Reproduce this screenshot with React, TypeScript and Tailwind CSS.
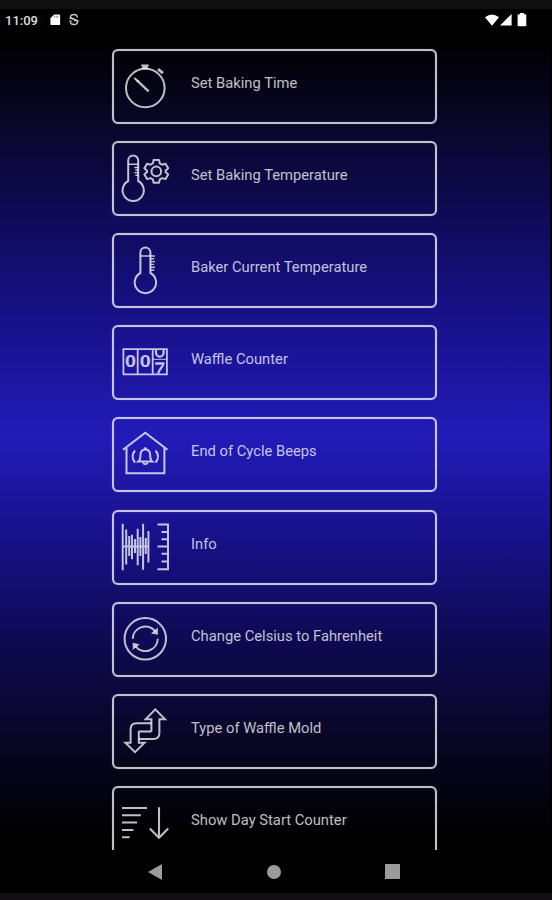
import type { ReactNode } from "react";

const Icon = ({ children }: { children: ReactNode }) => (
  <svg viewBox="0 0 56 60" className="h-[60px] w-[56px] shrink-0" fill="none" stroke="currentColor" strokeWidth="2">
    {children}
  </svg>
);

const Stopwatch = () => (
  <Icon>
    <circle cx="27.3" cy="31" r="19.3" />
    <path d="M23 7.6h8l-1.8 4.4h-4.4z" fill="currentColor" stroke="none" />
    <path d="M40 12.2l5 4" strokeWidth="2.8" />
    <path d="M16.3 21l4 3.6" />
    <path d="M19 23.4l11.6 11" strokeWidth="2.3" />
  </Icon>
);

const ThermometerGear = () => (
  <Icon>
    <path d="M10.2 32V11.5a5 5 0 0 1 10 0V32a10.6 10.6 0 1 1-10 0z" />
    <path d="M10.2 15.3h10M16.3 18.5h4M17.3 21h3M16.3 23.6h4M17.3 26.2h3" strokeWidth="1.4" />
    <circle cx="38.3" cy="22.4" r="4.8" />
    <path
      d="M35.6 11h5.4l.8 3.4 2.3 1.3 3.4-1 2.7 4.6-2.6 2.4v1.4l2.6 2.4-2.7 4.6-3.4-1-2.3 1.3-.8 3.4h-5.4l-.8-3.4-2.3-1.3-3.4 1-2.7-4.6 2.6-2.4v-1.4l-2.6-2.4 2.7-4.6 3.4 1 2.3-1.3z"
      strokeLinejoin="round"
    />
  </Icon>
);

const Thermometer = () => (
  <Icon>
    <path d="M22.4 32V11.4a5 5 0 0 1 10 0V32a10.7 10.7 0 1 1-10 0z" />
    <path d="M22.4 15H37M32.4 17.8h3.8M32.4 20.6H37M32.4 23.4h3.8M32.4 26.2H37M32.4 29h3.8" strokeWidth="1.4" />
  </Icon>
);

const Counter = () => (
  <Icon>
    <path d="M5.4 16.2h43.5v25.2H5.4zM19.7 16.2v25.2M34.7 16.2v25.2" strokeWidth="1.8" />
    <g fill="currentColor" stroke="none" fontFamily="Liberation Sans, sans-serif" fontWeight="700" fontSize="16.5">
      <text x="7" y="34.4" textLength="11" lengthAdjust="spacingAndGlyphs">0</text>
      <text x="21.7" y="34.4" textLength="11" lengthAdjust="spacingAndGlyphs">0</text>
    </g>
    <path d="M38 17v2.4a3.8 4.2 0 0 0 7.6 0V17" strokeWidth="2.2" />
    <path d="M35 26.3h13.5" strokeWidth="1" />
    <path d="M37.2 30.5h8.2c-.3 4-4.5 5-5.2 10" strokeWidth="2.3" />
  </Icon>
);

const HouseBell = () => (
  <Icon>
    <path d="M5 24.8L27.3 7.7 49.5 24.8M8.5 23v25.2h37.9V23" />
    <path d="M20.3 36.6c2.5-1.8 2-4.5 2.2-7.1.2-3 2-5 4.8-5s4.6 2 4.8 5c.2 2.6-.3 5.3 2.2 7.1z" />
    <path d="M27.3 22.2v2.3M25 37.5c.7 2.3 3.9 2.3 4.6 0" />
    <path d="M17 25.5c-3 3.7-3 8.3 0 12M37.6 25.5c3 3.7 3 8.3 0 12" />
  </Icon>
);

const WaveRuler = () => (
  <Icon>
    <path d="M4.7 5.8v46.5M8.2 11.5v35M11.2 18v20M14 16.7v24.6M17 21v14M19.7 10.7v36.6M22.4 19v19M25.1 5.8v46M27.8 20v16M30.4 13v31.6M4.7 28.4h26" />
    <path d="M39.5 6.4H50v44.9H39.5M39.5 28.4H50M43.5 14h6.5M43.5 21.2h6.5M43.5 35.8h6.5M43.5 43.4h6.5" />
  </Icon>
);

const Convert = () => (
  <Icon>
    <circle cx="27.3" cy="28.8" r="20.7" />
    <path d="M14.8 28.8a12.5 12.5 0 0 1 22.4-7.4M39.8 28.8a12.5 12.5 0 0 1-22.4 7.4" />
    <path d="M39.9 17.6v7.2l-7-1.4zM14.7 40v-7.2l7 1.4z" fill="currentColor" stroke="none" />
  </Icon>
);

const SwapArrows = () => (
  <Icon>
    <path d="M33.4 29.6V17.2h-5.8L37.3 7.4l9.7 9.8h-5.6V31q0 6-6 6H20.8" />
    <path d="M20.8 29v11.7h5.8L17 50.2l-9.6-9.5h5.2V27.3q0-6 6-6h14.8M20.8 29.6h12.6" />
  </Icon>
);

const SortDown = () => (
  <Icon>
    <path d="M4 14h25M4 21.2h18.8M4 28.5H19M4 36h11.4M4 43.3h7.7" />
    <path d="M41 13.3v30.5M31.8 34.6l9.2 9.2 9.2-9.2" strokeWidth="2.1" />
  </Icon>
);

const items = [
  { label: "Set Baking Time", icon: <Stopwatch /> },
  { label: "Set Baking Temperature", icon: <ThermometerGear /> },
  { label: "Baker Current Temperature", icon: <Thermometer /> },
  { label: "Waffle Counter", icon: <Counter /> },
  { label: "End of Cycle Beeps", icon: <HouseBell /> },
  { label: "Info", icon: <WaveRuler /> },
  { label: "Change Celsius to Fahrenheit", icon: <Convert /> },
  { label: "Type of Waffle Mold", icon: <SwapArrows /> },
  { label: "Show Day Start Counter", icon: <SortDown /> },
];

const StatusBar = () => (
  <header className="flex h-[21px] shrink-0 items-center justify-between pl-[5px] pr-[23px] text-white">
    <div className="flex items-center">
      <span className="w-[45px] pt-[2px] text-[13px] leading-none font-medium text-[#dcdcdc]">11:09</span>
      <svg viewBox="0 0 11 13" className="h-[12px] w-[11px]">
        <path d="M4 0.5h5.5q1 0 1 1V11q0 1-1 1H1q-1 0-1-1V4.5z" fill="#fff" />
        <path d="M4.6 2v2M6.4 2v2M8.2 2v2" stroke="#666" strokeWidth="0.8" />
      </svg>
      <svg viewBox="0 0 12 14" className="ml-[7px] h-[13px] w-[12px]" fill="none" stroke="#c4c4c4" strokeWidth="1.6">
        <path d="M9.6 4.8C9.6.6 2.2.6 2.2 4.2c0 2.8 7.8 2.4 7.8 5.2 0 4-8 4-8-.2" />
        <path d="M1 5.8h5M6 8.2h5M1 8.6h3" strokeWidth="1.3" />
      </svg>
    </div>
    <div className="flex items-center">
      <svg viewBox="0 0 14 12" className="h-[12px] w-[14px]">
        <path d="M0 3.2Q7-2.4 14 3.2L7 11.8z" fill="#fff" />
      </svg>
      <svg viewBox="0 0 12 12" className="ml-px h-[12px] w-[12px]">
        <path d="M11.6 0v11.6H0z" fill="#fff" />
      </svg>
      <svg viewBox="0 0 10 14" className="ml-[5px] h-[14px] w-[10px]">
        <path d="M3 0h4v1.3h1.3q1 0 1 1v10q0 1-1 1H1.6q-1 0-1-1v-10q0-1 1-1H3z" fill="#fff" />
      </svg>
    </div>
  </header>
);

const NavBar = () => (
  <nav className="flex h-[43px] shrink-0 items-center pl-[148px] text-[#9b9b9b]">
    <svg viewBox="0 0 14 16" className="h-4 w-[14px]">
      <path d="M14 0v16L0 8z" fill="currentColor" />
    </svg>
    <span className="ml-[105px] size-[14px] rounded-full bg-current" />
    <span className="ml-[104px] size-[15px] bg-current" />
  </nav>
);

export default function App() {
  return (
    <div className="flex h-[900px] w-[552px] flex-col overflow-hidden border-t-[9px] border-b-[7px] border-[#110f11] bg-black font-[Roboto,sans-serif]">
      <div className="mr-[2px] flex min-h-0 flex-1 flex-col bg-[linear-gradient(to_bottom,#000_0,#000_30px,#07051f_96px,#0f0a52_196px,#17118a_310px,#221bb8_427px,#17118a_530px,#0f0a52_630px,#07051f_745px,#000_830px)]">
        <StatusBar />
        <main className="flex min-h-0 flex-1 flex-col items-center gap-[17.2px] overflow-hidden pt-[18.6px]">
          {items.map(({ label, icon }) => (
            <button
              key={label}
              className="ml-[-2px] flex h-[75px] w-[325px] shrink-0 items-start rounded-[6px] border-2 border-white/75 pl-1 pt-[6px] text-left text-white/75 shadow-[0_0_1px_rgba(255,255,255,0.5),inset_0_0_1px_rgba(255,255,255,0.5)]"
            >
              {icon}
              <span className="ml-[17.5px] mt-[16px] text-[14.75px] leading-5">{label}</span>
            </button>
          ))}
        </main>
        <NavBar />
      </div>
    </div>
  );
}
